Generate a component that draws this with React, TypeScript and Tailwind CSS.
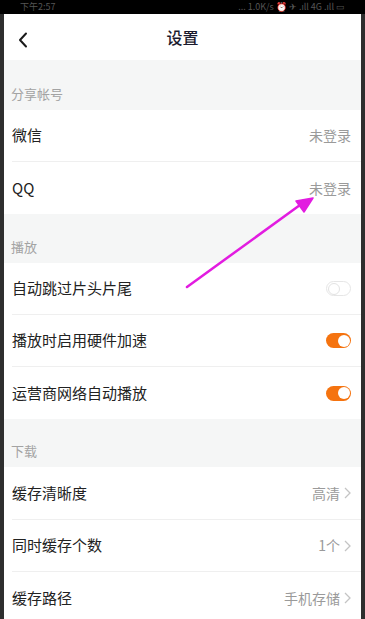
import React from "react";

const font = { fontFamily: '"Noto Sans CJK SC", "Noto Sans", sans-serif' };

function Section({ title, h }: { title: string; h: string }) {
  return (
    <div className={`${h} shrink-0 bg-[#f5f6f6] flex items-end pl-[7px] pb-[7px] text-[13px] text-[#a3a3a3]`}>
      {title}
    </div>
  );
}

function Chevron() {
  return (
    <svg width="7" height="12" viewBox="0 0 7 12" className="ml-[4px]">
      <path d="M1 1l5 5-5 5" fill="none" stroke="#c4c4c4" strokeWidth="1.3" />
    </svg>
  );
}

function Toggle({ on }: { on: boolean }) {
  return on ? (
    <div className="w-[25px] h-[15px] rounded-full bg-[#f5730f] flex items-center justify-end pr-[1.5px]">
      <div className="w-[12px] h-[12px] rounded-full bg-white" />
    </div>
  ) : (
    <div className="w-[25px] h-[15px] rounded-full bg-white border border-[#e6e6e6] flex items-center pl-[1px]">
      <div className="w-[12px] h-[12px] rounded-full bg-white border border-[#e3e3e3]" />
    </div>
  );
}

function Row({
  label,
  right,
  divider = true,
  h = "h-[52px]",
}: {
  label: string;
  right: React.ReactNode;
  divider?: boolean;
  h?: string;
}) {
  return (
    <div className={`${h} shrink-0 bg-white pl-[8px] flex flex-col`}>
      <div className="flex-1 flex items-center justify-between pr-[10px]">
        <span className="text-[15px] text-[#222]">{label}</span>
        <div className="flex items-center text-[14px] text-[#9a9a9a]">{right}</div>
      </div>
      {divider && <div className="h-px bg-[#efefef]" />}
    </div>
  );
}

export default function App() {
  return (
    <div className="relative w-[365px] h-[619px] overflow-hidden bg-[#262626] flex flex-col" style={font}>
      <div className="h-[14px] shrink-0 bg-black flex items-center justify-between px-[20px] text-[9px] text-[#555] leading-[14px] overflow-hidden">
        <span>下午2:57</span>
        <span>... 1.0K/s ⏰ ✈ .ıll 4G .ıll ▭</span>
      </div>
      <div className="flex-1 flex min-h-0">
        <div className="w-[4px] bg-[#2e2e2e]" />
        <div className="flex-1 flex flex-col bg-white min-h-0 overflow-hidden">
          <div className="h-[46px] shrink-0 bg-white relative flex items-center justify-center">
            <svg width="10" height="16" viewBox="0 0 10 16" className="absolute left-[14px] top-[18px]">
              <path d="M8 1.5L2 8l6 6.5" fill="none" stroke="#1a1a1a" strokeWidth="2" strokeLinecap="round" strokeLinejoin="round" />
            </svg>
            <span className="text-[16px] font-medium text-[#1a1a2e]">设置</span>
          </div>
          <Section title="分享帐号" h="h-[50px]" />
          <Row label="微信" right={<span>未登录</span>} />
          <Row label="QQ" right={<span>未登录</span>} divider={false} />
          <Section title="播放" h="h-[49px]" />
          <Row label="自动跳过片头片尾" right={<Toggle on={false} />} />
          <Row label="播放时启用硬件加速" right={<Toggle on={true} />} />
          <Row label="运营商网络自动播放" right={<Toggle on={true} />} divider={false} />
          <Section title="下载" h="h-[48px]" />
          <Row label="缓存清晰度" right={<><span>高清</span><Chevron /></>} h="h-[53px]" />
          <Row label="同时缓存个数" right={<><span>1个</span><Chevron /></>} />
          <Row label="缓存路径" right={<><span>手机存储</span><Chevron /></>} divider={false} />
        </div>
        <div className="w-[4px] bg-[#2e2e2e]" />
      </div>
      <svg className="absolute left-0 top-0 pointer-events-none" width="365" height="619" viewBox="0 0 365 619">
        <path d="M187 287 L300 205" stroke="#e21ce0" strokeWidth="2.5" strokeLinecap="round" />
        <path d="M313 198 L296 201 L304 212 Z" fill="#e21ce0" stroke="#e21ce0" strokeWidth="1.5" strokeLinejoin="round" />
      </svg>
    </div>
  );
}
